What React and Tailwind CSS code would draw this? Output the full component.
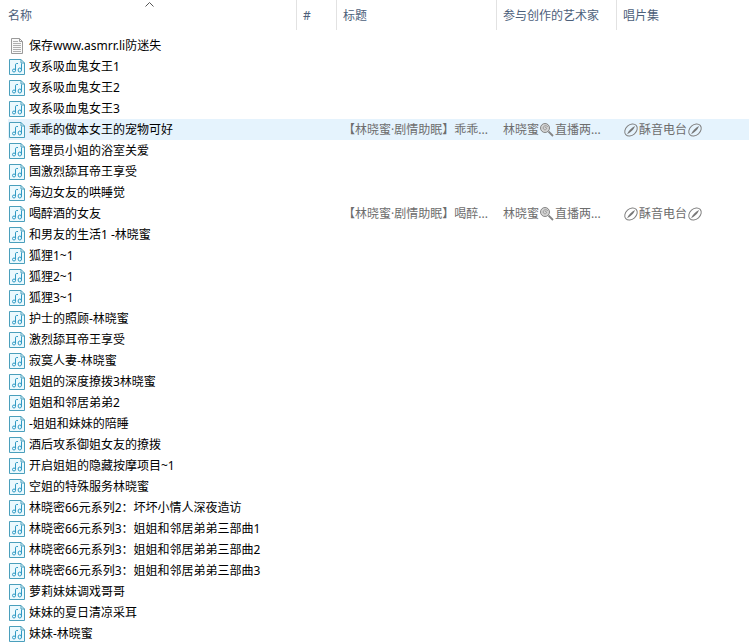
const files = [
  { name: '保存www.asmrr.li防迷失', kind: 'text' },
  { name: '攻系吸血鬼女王1' },
  { name: '攻系吸血鬼女王2' },
  { name: '攻系吸血鬼女王3' },
  { name: '乖乖的做本女王的宠物可好', title: '【林晓蜜·剧情助眠】乖乖...', tagged: true, active: true },
  { name: '管理员小姐的浴室关爱' },
  { name: '国激烈舔耳帝王享受' },
  { name: '海边女友的哄睡觉' },
  { name: '喝醉酒的女友', title: '【林晓蜜·剧情助眠】喝醉...', tagged: true },
  { name: '和男友的生活1 -林晓蜜' },
  { name: '狐狸1~1' },
  { name: '狐狸2~1' },
  { name: '狐狸3~1' },
  { name: '护士的照顾-林晓蜜' },
  { name: '激烈舔耳帝王享受' },
  { name: '寂寞人妻-林晓蜜' },
  { name: '姐姐的深度撩拨3林晓蜜' },
  { name: '姐姐和邻居弟弟2' },
  { name: '-姐姐和妹妹的陪睡' },
  { name: '酒后攻系御姐女友的撩拨' },
  { name: '开启姐姐的隐藏按摩项目~1' },
  { name: '空姐的特殊服务林晓蜜' },
  { name: '林晓密66元系列2：坏坏小情人深夜造访' },
  { name: '林晓密66元系列3：姐姐和邻居弟弟三部曲1' },
  { name: '林晓密66元系列3：姐姐和邻居弟弟三部曲2' },
  { name: '林晓密66元系列3：姐姐和邻居弟弟三部曲3' },
  { name: '萝莉妹妹调戏哥哥' },
  { name: '妹妹的夏日清凉采耳' },
  { name: '妹妹-林晓蜜' },
];

function TextFileIcon() {
  return (
    <svg className="size-4 shrink-0" viewBox="0 0 16 16" fill="none" aria-hidden="true">
      <path d="M2.5.5h8l3 3v12h-11z" fill="#fafafa" stroke="#9a9a9a" />
      <path d="M10.5.5v3h3" stroke="#9a9a9a" />
      <path d="M4 3.5h5M4 5.5h8M4 7.5h8M4 9.5h8M4 11.5h8M4 13.5h8" stroke="#b0b0b0" />
    </svg>
  );
}

function MusicFileIcon() {
  return (
    <svg className="size-4 shrink-0" viewBox="0 0 16 16" fill="none" aria-hidden="true">
      <path d="M.5.5h11.500l3.500 3.500v11.500H.5z" fill="#ebf9fe" stroke="#4a9fbc" />
      <path d="M12 .5V4h3.500" stroke="#4a9fbc" />
      <path d="M6.500 11.500V5.500c0-.8.600-1 2.500-1M12.500 11.500V4.500" stroke="#2f9ac4" />
      <circle cx="5" cy="11.500" r="1.500" stroke="#2f9ac4" />
      <ellipse cx="10.800" cy="11" rx="1.700" ry="2" stroke="#2f9ac4" />
    </svg>
  );
}

function LollipopIcon() {
  return (
    <svg className="size-4 shrink-0" viewBox="0 0 16 16" fill="none" aria-hidden="true">
      <circle cx="6" cy="6" r="4.500" fill="#d4d4d4" stroke="#858585" />
      <path d="M6 6c.2-1 1.600-.7 1.600.5 0 1.600-3.200 1.900-3.400-.3C4 3.600 7.500 2.800 9 5" stroke="#8a8a8a" strokeWidth=".8" />
      <path d="m9.500 9.500 4.500 4.500" stroke="#858585" strokeWidth="1.800" />
    </svg>
  );
}

function LeafIcon() {
  return (
    <svg className="size-4 shrink-0" viewBox="0 0 16 16" fill="none" aria-hidden="true">
      <ellipse cx="8" cy="8" rx="7" ry="5.200" transform="rotate(-42 8 8)" stroke="#808080" />
      <path d="M4 12.200C5.500 9 8.500 5.500 12 4c-1 3.500-4.500 6.500-8 8.200z" fill="#777" />
    </svg>
  );
}

const headings = ['#', '标题', '参与创作的艺术家', '唱片集'];

export default function App() {
  return (
    <main className="bg-white pl-2 font-['Noto_Sans','Noto_Sans_CJK_SC',sans-serif] text-xs text-black">
      <table className="w-full table-fixed border-collapse text-left whitespace-nowrap">
        <colgroup>
          <col className="w-72" />
          <col className="w-10" />
          <col className="w-40" />
          <col className="w-30" />
          <col />
        </colgroup>
        <thead className="text-[#4c607a]">
          <tr>
            <th className="p-0 pb-[5px] font-normal" aria-sort="ascending">
              <button type="button" className="relative flex h-[30px] w-full items-center pt-0.5">
                名称
                <svg className="absolute top-0.5 left-[137px] h-[5px] w-[9px]" viewBox="0 0 9 5" fill="none" aria-hidden="true">
                  <path d="m.5 4.500 4-4 4 4" stroke="#555" />
                </svg>
              </button>
            </th>
            {headings.map((heading) => (
              <th key={heading} className="p-0 pb-[5px] font-normal">
                <button type="button" className="flex h-[30px] w-full items-center border-l border-[#e2e2e2] pt-0.5 pl-1.5">
                  {heading}
                </button>
              </th>
            ))}
          </tr>
        </thead>
        <tbody>
          {files.map((file) => (
            <tr key={file.name} className={file.active ? 'bg-[#e5f3fd]' : ''}>
              <td className="p-0">
                <div className="flex h-[21px] items-center gap-1 pl-px">
                  {file.kind === 'text' ? <TextFileIcon /> : <MusicFileIcon />}
                  {file.name}
                </div>
              </td>
              <td className="p-0" />
              <td className="p-0 pl-[7px] text-[#6d6d6d]">{file.title}</td>
              <td className="p-0 pl-[7px] text-[#6d6d6d]">
                {file.tagged && (
                  <div className="flex items-center">
                    林晓蜜
                    <LollipopIcon />
                    直播两...
                  </div>
                )}
              </td>
              <td className="p-0 pl-[7px] text-[#6d6d6d]">
                {file.tagged && (
                  <div className="flex items-center">
                    <LeafIcon />
                    酥音电台
                    <LeafIcon />
                  </div>
                )}
              </td>
            </tr>
          ))}
        </tbody>
      </table>
    </main>
  );
}
